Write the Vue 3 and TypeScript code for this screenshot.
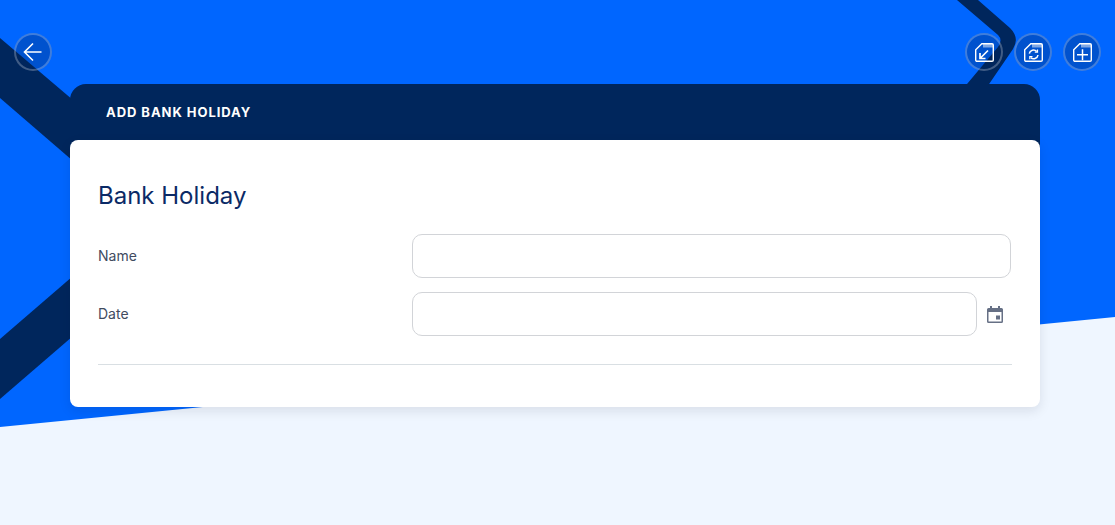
<script setup lang="ts">
const rows = [
  { label: "Name", hasPicker: false },
  { label: "Date", hasPicker: true },
];
</script>

<template>
  <div class="page">
    <svg class="backdrop" width="1115" height="525" viewBox="0 0 1115 525" aria-hidden="true">
      <polygon class="pale" points="0,427 1115,317 1115,525 0,525" />
      <polygon class="band" points="0,38 80,106 80,167 0,98" />
      <polygon class="band" points="0,339 80,270 80,330 0,399" />
      <path class="band" d="M957,0 L978,0 L1010,28 Q1020,38 1013,49 L985,90 L962,90 L998,47 Q1003,40 998,35 Z" />
    </svg>

    <div class="topbar">
      <button class="round" type="button" aria-label="Back">
        <svg width="22" height="22" viewBox="0 0 22 22" fill="none">
          <path d="M19.5 11H3M11 2.5L2.5 11l8.500 8.500" stroke="#fff" stroke-width="1.6" />
        </svg>
      </button>
      <div class="actions">
        <button class="round" type="button" aria-label="Import">
          <svg width="19" height="19" viewBox="0 0 19 19" fill="none" stroke="#fff" stroke-width="1.4">
            <path d="M6.800 .7H17a1.300 1.300 0 0 1 1.300 1.300v15a1.300 1.300 0 0 1-1.300 1.300H2A1.300 1.300 0 0 1 .7 17V6.800z" />
            <path d="M9 1v3.500M11 1v3.500M13 1v3.500M15 1v3.500M17 1v3.500" stroke-width="1" />
            <path d="M13 7.500L5 15.500M5 10v5.500H10.500" stroke-width="1.700" />
          </svg>
        </button>
        <button class="round" type="button" aria-label="Refresh">
          <svg width="19" height="19" viewBox="0 0 19 19" fill="none" stroke="#fff" stroke-width="1.4">
            <path d="M6.800 .7H17a1.300 1.300 0 0 1 1.300 1.300v15a1.300 1.300 0 0 1-1.300 1.300H2A1.300 1.300 0 0 1 .7 17V6.800z" />
            <path d="M9 1v3.500M11 1v3.500M13 1v3.500M15 1v3.500M17 1v3.500" stroke-width="1" />
            <path d="M5.300 10.700a4.300 4.300 0 0 1 7.400-2.200M14 12a4.300 4.300 0 0 1-7.400 2.400" stroke-width="1.500" />
            <path d="M13.500 6.500v2.700h-2.700M5.800 16.200v-2.700h2.700" stroke-width="1.200" />
          </svg>
        </button>
        <button class="round" type="button" aria-label="Add">
          <svg width="19" height="19" viewBox="0 0 19 19" fill="none" stroke="#fff" stroke-width="1.4">
            <path d="M6.800 .7H17a1.300 1.300 0 0 1 1.300 1.300v15a1.300 1.300 0 0 1-1.300 1.300H2A1.300 1.300 0 0 1 .7 17V6.800z" />
            <path d="M9 1v3.500M11 1v3.500M13 1v3.500M15 1v3.500M17 1v3.500" stroke-width="1" />
            <path d="M9.500 6.200v11M4 11.700h11" stroke-width="1.500" />
          </svg>
        </button>
      </div>
    </div>

    <section class="card">
      <header class="card-head">ADD BANK HOLIDAY</header>
      <div class="card-body">
        <h2 class="title">Bank Holiday</h2>
        <div v-for="row in rows" :key="row.label" class="row">
          <label class="label">{{ row.label }}</label>
          <div class="control">
            <input class="field" type="text" />
            <svg v-if="row.hasPicker" class="picker" width="16" height="17" viewBox="0 0 16 17" fill="#667085">
              <path d="M3 0h2v2h6V0h2v2h1.500A1.500 1.500 0 0 1 16 3.500v12a1.500 1.500 0 0 1-1.500 1.500h-13A1.500 1.500 0 0 1 0 15.500v-12A1.500 1.500 0 0 1 1.500 2H3zM1.500 6v9.500h13V6zM9 9.500h4v4H9z" fill-rule="evenodd" />
            </svg>
          </div>
        </div>
        <hr class="rule" />
      </div>
    </section>
  </div>
</template>

<style>
html,
body {
  margin: 0;
  background: #0066ff;
}
</style>

<style scoped>
.page {
  position: relative;
  width: 1115px;
  height: 525px;
  overflow: hidden;
  background: #0066ff;
  font-family: Inter, "Liberation Sans", sans-serif;
}
.backdrop {
  position: absolute;
  inset: 0;
}
.pale {
  fill: #eff6ff;
}
.band {
  fill: #00265c;
}
.topbar {
  position: relative;
  display: flex;
  justify-content: space-between;
  height: 38px;
  padding: 33px 14px 13px;
}
.actions {
  display: flex;
  gap: 11px;
}
.round {
  display: flex;
  align-items: center;
  justify-content: center;
  box-sizing: border-box;
  width: 38px;
  height: 38px;
  padding: 0;
  border: 2px solid rgba(255, 255, 255, 0.25);
  border-radius: 50%;
  background: rgba(0, 38, 92, 0.3);
}
.card {
  position: relative;
  width: 970px;
  margin-left: 70px;
}
.card-head {
  box-sizing: border-box;
  height: 66px;
  padding: 21px 36px 0;
  border-radius: 16px 16px 0 0;
  background: #00265c;
  color: #fff;
  font-size: 13px;
  font-weight: 700;
  line-height: 15px;
  letter-spacing: 0.95px;
}
.card-body {
  position: relative;
  box-sizing: border-box;
  height: 267px;
  margin-top: -10px;
  padding: 41px 28px 0;
  border-radius: 8px;
  background: #fff;
  box-shadow: 0 4px 12px rgba(16, 24, 40, 0.1);
}
.title {
  height: 29px;
  margin: 0 0 24px;
  color: #0b2a66;
  font-size: 24px;
  font-weight: 400;
  line-height: 29px;
}
.row {
  display: grid;
  grid-template-columns: 314px 1fr;
  align-items: center;
  margin-bottom: 14px;
}
.label {
  color: #414b5f;
  font-size: 14px;
  line-height: 16px;
}
.control {
  display: flex;
  align-items: center;
  width: 599px;
}
.field {
  flex: 1;
  min-width: 0;
  box-sizing: border-box;
  height: 44px;
  border: 1px solid #d2d4d8;
  border-radius: 10px;
  background: #fff;
}
.picker {
  flex: none;
  margin: 0 8px 0 10px;
}
.rule {
  height: 1px;
  margin: 28px 0 0;
  border: 0;
  background: #d9dfe3;
}
</style>
